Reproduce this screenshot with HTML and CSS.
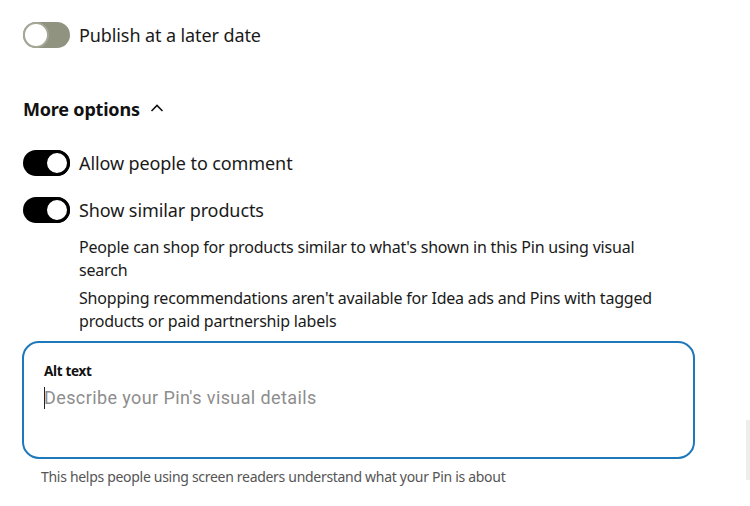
FILE: index.html
```html
<!DOCTYPE html>
<html>
<head>
<meta charset="utf-8">
<link rel="stylesheet" href="styles.css">
</head>
<body>
<main class="panel">
  <div class="toggle-row first">
    <span class="switch off"><span class="knob"></span></span>
    <span class="toggle-label">Publish at a later date</span>
  </div>

  <div class="more">
    <span class="more-title">More options</span>
    <svg class="chev" width="14" height="10" viewBox="0 0 14 10"><path d="M1.5 8 L7 2.5 L12.5 8" fill="none" stroke="#111" stroke-width="1.6"/></svg>
  </div>

  <div class="toggle-row">
    <span class="switch on"><span class="knob"></span></span>
    <span class="toggle-label">Allow people to comment</span>
  </div>
  <div class="toggle-row second">
    <span class="switch on"><span class="knob"></span></span>
    <span class="toggle-label">Show similar products</span>
  </div>

  <div class="notes">
    <p>People can shop for products similar to what's shown in this Pin using visual search</p>
    <p>Shopping recommendations aren't available for Idea ads and Pins with tagged products or paid partnership labels</p>
  </div>

  <div class="alt-box">
    <div class="alt-label">Alt text</div>
    <div class="alt-input"><span class="caret"></span>Describe your Pin's visual details</div>
  </div>
  <div class="helper">This helps people using screen readers understand what your Pin is about</div>
</main>
<div class="edge"></div>
</body>
</html>
```

FILE: styles.css
```css
html, body {
  margin: 0;
  padding: 0;
  background: #fff;
  width: 750px;
  height: 506px;
  overflow: hidden;
}
body {
  font-family: "Noto Sans", "Open Sans", sans-serif;
  color: #111;
  position: relative;
}
.panel {
  display: flex;
  flex-direction: column;
  padding: 22px 0 0 23px;
}
.toggle-row {
  display: flex;
  align-items: center;
  gap: 9px;
  height: 26px;
}
.toggle-row.second {
  margin-top: 21px;
}
.switch {
  width: 47px;
  height: 26px;
  border-radius: 13px;
  display: flex;
  align-items: center;
  box-sizing: border-box;
  flex-shrink: 0;
}
.switch.off {
  background: #8f937f;
  justify-content: flex-start;
}
.switch.on {
  background: #000;
  justify-content: flex-end;
}
.knob {
  width: 26px;
  height: 26px;
  border-radius: 50%;
  background: #fff;
  box-sizing: border-box;
}
.switch.off .knob {
  border: 2px solid #a5a897;
}
.switch.on .knob {
  border: 3px solid #000;
}
.toggle-label {
  font-size: 18px;
  letter-spacing: -0.1px;
  color: #1a1a1a;
  margin-top: -1px;
}
.more {
  display: flex;
  align-items: center;
  gap: 10px;
  margin-top: 48px;
  margin-bottom: 28px;
  height: 26px;
}
.more-title {
  font-size: 18px;
  font-weight: 700;
  letter-spacing: -0.2px;
}
.chev {
  margin-top: -2px;
}
.notes {
  margin: 13px 0 0 56px;
  width: 585px;
  font-size: 16px;
  line-height: 23px;
  color: #1a1a1a;
  letter-spacing: -0.2px;
}
.notes p {
  margin: 0 0 5px 0;
}
.alt-box {
  margin: 3px 0 0 -1px;
  width: 673px;
  height: 118px;
  box-sizing: border-box;
  border: 2px solid #1f78b9;
  border-radius: 17px;
  padding: 19px 20px 0 20px;
}
.alt-label {
  font-size: 13.5px;
  font-weight: 700;
  letter-spacing: -0.3px;
  color: #111;
  line-height: 18px;
}
.alt-input {
  margin-top: 7px;
  font-family: "Roboto", "Liberation Sans", sans-serif;
  font-size: 18px;
  color: #8d8d8d;
  line-height: 22px;
  display: flex;
  align-items: center;
  letter-spacing: 0.4px;
}
.caret {
  display: inline-block;
  width: 1px;
  height: 22px;
  background: #222;
  margin-right: -1px;
}
.helper {
  margin: 9px 0 0 18px;
  font-size: 14px;
  color: #555;
  letter-spacing: -0.3px;
  line-height: 18px;
}
.edge {
  position: absolute;
  right: 0;
  top: 420px;
  width: 4px;
  height: 60px;
  background: #eee;
}
```
